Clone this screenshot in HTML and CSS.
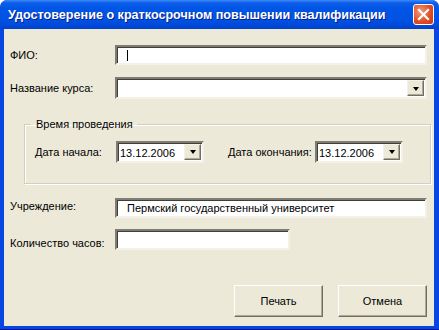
FILE: index.html
```html
<!DOCTYPE html>
<html lang="ru">
<head>
    <meta charset="UTF-8">
    <title>Удостоверение о краткосрочном повышении квалификации</title>
    <link rel="stylesheet" href="styles.css">
</head>
<body>
    <div class="window">
        <div class="titlebar">
            <span class="title">Удостоверение о краткосрочном повышении квалификации</span>
            <span class="close">
                <svg width="13" height="13" viewBox="0 0 13 13">
                    <path d="M2 2 L11 11 M11 2 L2 11" stroke="#fff" stroke-width="2.2" stroke-linecap="square"/>
                </svg>
            </span>
        </div>

        <div class="client">
            <div class="row row-fio">
                <label>ФИО:</label>
                <div class="edit"><span class="caret"></span></div>
            </div>

            <div class="row row-course">
                <label>Название курса:</label>
                <div class="combo">
                    <span class="drop-btn"><span class="arrow"></span></span>
                </div>
            </div>

            <fieldset class="group">
                <legend>Время проведения</legend>
                <div class="dates">
                    <label class="date-start">Дата начала:</label>
                    <div class="date">
                        <span>13.12.2006</span>
                        <span class="drop-btn"><span class="arrow"></span></span>
                    </div>
                    <label class="date-end">Дата окончания:</label>
                    <div class="date">
                        <span>13.12.2006</span>
                        <span class="drop-btn"><span class="arrow"></span></span>
                    </div>
                </div>
            </fieldset>

            <div class="row row-org">
                <label>Учреждение:</label>
                <div class="edit text">Пермский государственный университет</div>
            </div>

            <div class="row row-hours">
                <label>Количество часов:</label>
                <div class="edit short"></div>
            </div>

            <div class="buttons">
                <button>Печать</button>
                <button>Отмена</button>
            </div>
        </div>
    </div>
</body>
</html>
```

FILE: styles.css
```css
body {
    margin: 0;
    background: #fff;
    font-family: "Liberation Sans", Arial, sans-serif;
    font-size: 11px;
    color: #000;
}
.window {
    width: 439px;
    height: 330px;
    box-sizing: border-box;
    display: flex;
    flex-direction: column;
    background: #0846E2;
    border-radius: 7px 7px 0 0;
    border-bottom: 1px solid #00138C;
    overflow: hidden;
}
.titlebar {
    height: 29px;
    flex-shrink: 0;
    display: flex;
    align-items: center;
    justify-content: space-between;
    padding: 0 5px 0 8px;
    background: linear-gradient(#3C8CF8 0, #0C5CEB 3px, #0055E5 9px, #0052E3 20px, #0048D8 26px, #0040C8 29px);
    border-radius: 7px 7px 0 0;
}
.title {
    color: #fff;
    font-weight: bold;
    font-size: 12.6px;
    text-shadow: 1px 1px #0A1E8C;
    padding-top: 1px;
}
.close {
    width: 19px;
    height: 19px;
    display: flex;
    align-items: center;
    justify-content: center;
    background: radial-gradient(circle at 35% 35%, #F29A7C, #E04A22 60%, #C8371A);
    border: 1px solid #fff;
    border-radius: 3px;
}
.client {
    flex: 1;
    margin: 0 5px 3px 4px;
    background: #ECE9D8;
    padding: 16px 6px 0 6px;
    display: flex;
    flex-direction: column;
}
.row {
    display: flex;
    align-items: center;
}
.row label {
    width: 105px;
    flex-shrink: 0;
}
.edit, .combo, .date {
    box-sizing: border-box;
    background: #fff;
    border-top: 2px solid #7F7D72;
    border-left: 2px solid #7F7D72;
    border-right: 2px solid #F4F2E8;
    border-bottom: 2px solid #F4F2E8;
    box-shadow: inset 1px 1px #3F3E38;
}
.edit {
    width: 312px;
    height: 20px;
    position: relative;
}
.caret {
    position: absolute;
    left: 10px;
    top: 3px;
    width: 1px;
    height: 11px;
    background: #000;
}
.row-course {
    margin-top: 12px;
}
.combo {
    width: 312px;
    height: 22px;
    display: flex;
    justify-content: flex-end;
    padding: 1px;
}
.drop-btn {
    width: 17px;
    box-sizing: border-box;
    background: #ECE9D8;
    border-top: 1px solid #F4F2E8;
    border-left: 1px solid #F4F2E8;
    border-right: 1px solid #716F64;
    border-bottom: 1px solid #716F64;
    box-shadow: inset -1px -1px #ACA899;
    display: flex;
    align-items: center;
    justify-content: center;
}
.arrow {
    width: 0;
    height: 0;
    border-left: 3.5px solid transparent;
    border-right: 3.5px solid transparent;
    border-top: 4px solid #000;
    margin-top: 1px;
}
.group {
    margin: 19px 0 0 14px;
    width: 407px;
    box-sizing: border-box;
    height: 66px;
    border: 1px solid #D0D0BF;
    box-shadow: 1px 1px #fff, inset 1px 1px #fff;
    padding: 0;
}
.group legend {
    margin-left: 6px;
    padding: 0 4px 0 5px;
}
.dates {
    display: flex;
    align-items: center;
    padding: 11px 0 0 10px;
}
.date {
    width: 88px;
    height: 22px;
    display: flex;
    justify-content: space-between;
    align-items: center;
    padding: 1px 1px 1px 2px;
}
.date span:first-child {
    padding-top: 1px;
}
.date .drop-btn {
    height: 100%;
}
.date-start {
    width: 81px;
}
.date-end {
    margin-left: 24px;
    width: 87px;
}
.row-org {
    margin-top: 14px;
}
.row-org label {
    margin-top: -4px;
}
.text {
    padding: 2px 0 0 10px;
}
.row-hours {
    margin-top: 11px;
}
.row-hours label {
    margin-top: 6px;
}
.short {
    width: 175px;
    height: 21px;
}
.buttons {
    display: flex;
    justify-content: flex-end;
    gap: 15px;
    margin-top: 35px;
    padding-right: 1px;
}
button {
    width: 89px;
    height: 32px;
    font-family: inherit;
    font-size: 11px;
    color: #000;
    background: #ECE9D8;
    border-top: 1px solid #fff;
    border-left: 1px solid #fff;
    border-right: 1px solid #716F64;
    border-bottom: 1px solid #716F64;
    box-shadow: inset -1px -1px #ACA899;
    padding: 0;
}
```
